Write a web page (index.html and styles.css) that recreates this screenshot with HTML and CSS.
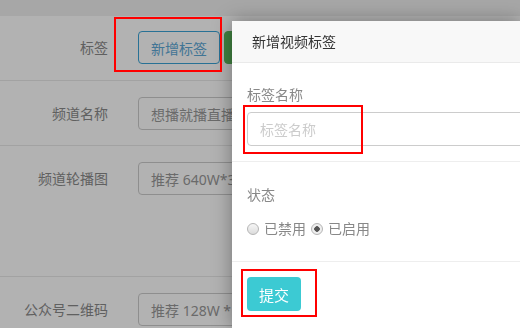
FILE: index.html
```html
<!DOCTYPE html>
<html lang="zh-CN">
<head>
    <meta charset="UTF-8">
    <meta name="viewport" content="width=device-width, initial-scale=1.0">
    <title>新增视频标签</title>
    <link rel="stylesheet" href="styles.css">
</head>
<body>
    <div class="topbar"></div>

    <form class="channel-form">
        <div class="row row-tags">
            <label class="row-label">标签</label>
            <div class="row-field">
                <button type="button" class="btn-outline">新增标签</button>
                <button type="button" class="btn-green"></button>
            </div>
        </div>
        <div class="row">
            <label class="row-label">频道名称</label>
            <div class="row-field">
                <input type="text" class="field" value="想播就播直播间">
            </div>
        </div>
        <div class="row row-tall">
            <label class="row-label">频道轮播图</label>
            <div class="row-field">
                <input type="text" class="field" value="推荐 640W*360H">
            </div>
        </div>
        <div class="row">
            <label class="row-label">公众号二维码</label>
            <div class="row-field">
                <input type="text" class="field" value="推荐 128W * 128H">
            </div>
        </div>
    </form>

    <div class="mask"></div>

    <div class="modal">
        <div class="modal-head">新增视频标签</div>
        <div class="modal-section">
            <label class="modal-label">标签名称</label>
            <input type="text" class="modal-input" placeholder="标签名称">
        </div>
        <div class="modal-section">
            <label class="modal-label">状态</label>
            <div class="radios">
                <label class="radio"><input type="radio" name="status">已禁用</label>
                <label class="radio"><input type="radio" name="status" checked>已启用</label>
            </div>
        </div>
        <div class="modal-foot">
            <button type="button" class="btn-submit">提交</button>
        </div>
    </div>

    <!-- annotation boxes -->
    <div class="mark mark-add"></div>
    <div class="mark mark-name"></div>
    <div class="mark mark-submit"></div>
</body>
</html>
```

FILE: styles.css
```css
:root{
    --line:#e8e8e8;
    --border:#ccc;
    --label:#888;
    --text:#333;
    --cyan:#3ccad3;
    --blue:#3aa3d6;
    --green:#5cb85c;
    --red:#ff0000;
}

*{
    box-sizing: border-box;
    margin: 0;
    font-family: "Noto Sans", "Noto Sans CJK SC", sans-serif;
}

body{
    width: 520px;
    height: 328px;
    overflow: hidden;
    background: #fff;
    font-size: 14px;
    color: var(--text);
}

.topbar{
    height: 16px;
    background: #f0f0f0;
}

/* background form */
.row{
    display: flex;
    align-items: flex-start;
    gap: 30px;
    height: 65px;
    padding-top: 16px;
    border-bottom: 1px solid var(--line);
}
.row-tags{
    height: 65px;
    padding-top: 15px;
}
.row-tall{
    height: 131px;
}
.row-label{
    width: 108px;
    flex: none;
    text-align: right;
    line-height: 33px;
    color: #8a8a8a;
}
.row-field{
    display: flex;
    gap: 4px;
}

.btn-outline, .btn-green{
    height: 33px;
    padding: 0 12px;
    border-radius: 4px;
    font-size: 14px;
    background: #fff;
}
.btn-outline{
    width: 82px;
    border: 1px solid var(--blue);
    color: #5ea8d6;
}
.btn-green{
    width: 60px;
    border: 1px solid var(--green);
    background: var(--green);
}

.field{
    width: 300px;
    height: 33px;
    padding: 0 12px;
    border: 1px solid var(--border);
    border-radius: 4px;
    font-size: 14px;
    color: #999;
    background: #fff;
}

.mask{
    position: fixed;
    inset: 0;
    background: rgba(0,0,0,0.3);
}

/* dialog */
.modal{
    position: absolute;
    left: 232px;
    top: 21px;
    width: 288px;
    height: 307px;
    background: #fff;
    box-shadow: 0 0 18px rgba(0,0,0,0.35);
    overflow: hidden;
}
.modal-head{
    height: 42px;
    padding-left: 20px;
    line-height: 41px;
    background: #f8f8f8;
    border-bottom: 1px solid #eaeaea;
    color: var(--text);
}
.modal-section{
    padding: 22px 0 15px 15px;
    border-bottom: 1px solid #eee;
}
.modal-section + .modal-section{
    padding: 23px 15px 22px;
}
.modal-label{
    display: block;
    line-height: 20px;
    margin-bottom: 7px;
    color: var(--label);
}
.modal-section + .modal-section .modal-label{
    margin-bottom: 14px;
}
.modal-input{
    width: 300px;
    height: 34px;
    padding: 0 12px;
    border: 1px solid var(--border);
    border-radius: 4px;
    font-size: 14px;
}
.modal-input::placeholder{
    color: #ccc;
}

.radios{
    display: flex;
    gap: 5px;
    line-height: 20px;
}
.radio{
    display: flex;
    align-items: center;
    gap: 5px;
    color: var(--label);
}
.radio input{
    appearance: none;
    width: 12px;
    height: 12px;
    margin: 0;
    border: 1px solid #b5b5b5;
    border-radius: 50%;
    background: linear-gradient(#f6f6f6, #dcdcdc);
}
.radio input:checked{
    background: radial-gradient(circle, #555 0 2.5px, #eee 3px);
}

.modal-foot{
    padding: 15px;
}
.btn-submit{
    width: 54px;
    height: 34px;
    border: none;
    border-radius: 4px;
    background: var(--cyan);
    color: #fff;
    font-size: 15px;
}

/* red annotation frames */
.mark{
    position: absolute;
    border: 2px solid var(--red);
}
.mark-add{
    left: 114px;
    top: 17px;
    width: 108px;
    height: 55px;
}
.mark-name{
    left: 243px;
    top: 105px;
    width: 120px;
    height: 49px;
}
.mark-submit{
    left: 241px;
    top: 269px;
    width: 76px;
    height: 48px;
}
```
